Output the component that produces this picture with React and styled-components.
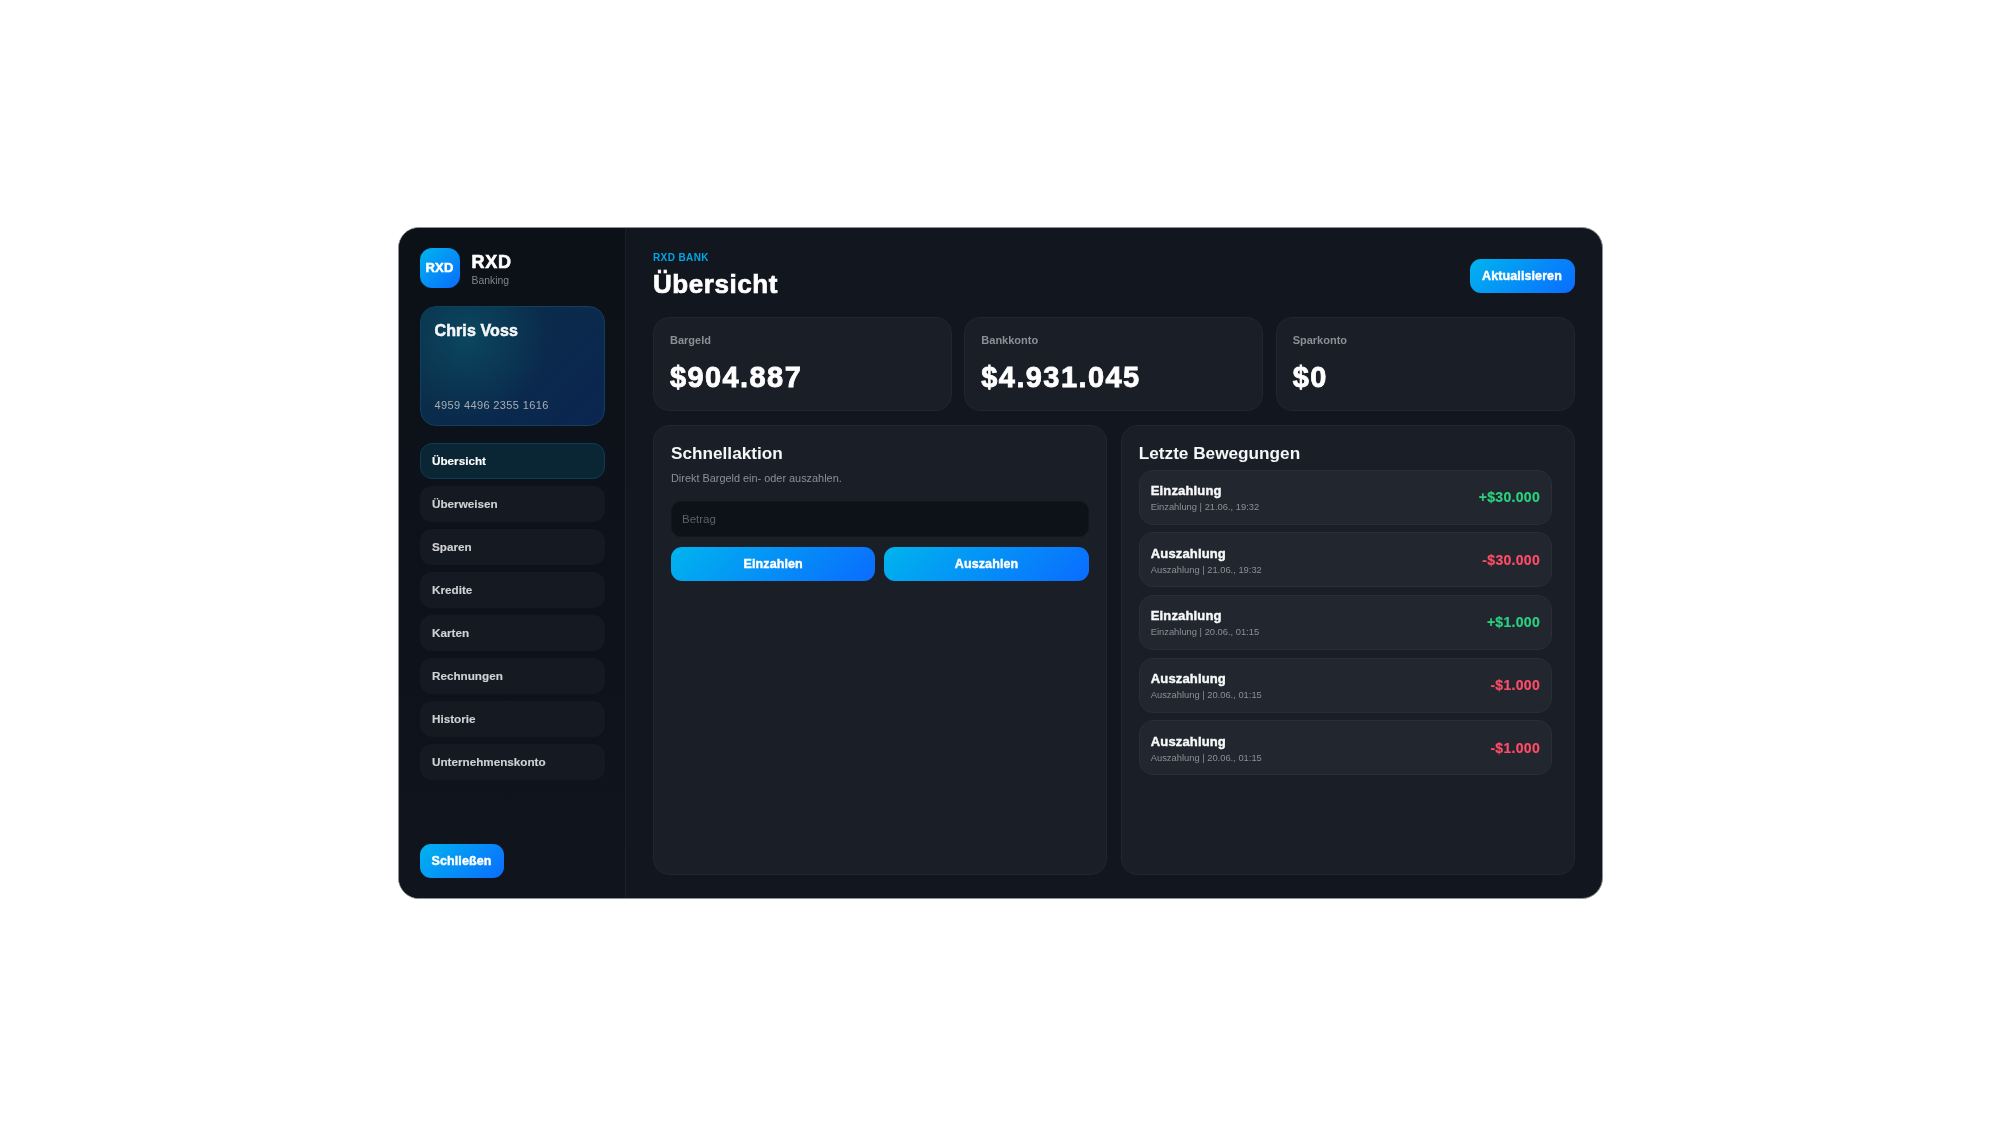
import React from "react";
import styled, { createGlobalStyle } from "styled-components";

const Global = createGlobalStyle`
  html, body { margin: 0; padding: 0; background: #fff; }
  body { font-family: "Liberation Sans", Arial, sans-serif; }
  * { box-sizing: border-box; }
`;

const gradient = "linear-gradient(135deg, #00b4ee, #0a6cff)";

const Page = styled.div`
  width: 2000px;
  height: 1125px;
  display: flex;
  align-items: center;
  justify-content: center;
`;
const Frame = styled.div`
  width: 1205px;
  height: 672px;
  display: flex;
  border: 1.5px solid #8d9297;
  border-radius: 21px;
  overflow: hidden;
  background: #12161e;
  filter: blur(0.4px);
`;
const Sidebar = styled.aside`
  width: 227px;
  flex: none;
  display: flex;
  flex-direction: column;
  padding: 20px 20px 20px 21px;
  background: linear-gradient(180deg, #0c1017, #0f141d);
  border-right: 1px solid #1a1f28;
`;
const Brand = styled.div`
  height: 40px;
  display: flex;
  align-items: center;
  gap: 12px;
`;
const Logo = styled.div`
  width: 40px;
  height: 40px;
  border-radius: 12px;
  background: ${gradient};
  color: #fff;
  font-size: 13px;
  font-weight: 900;
  letter-spacing: 0.2px;
  display: flex;
  align-items: center;
  justify-content: center;
  -webkit-text-stroke: 0.5px #fff;
`;
const BrandText = styled.div`
  display: flex;
  flex-direction: column;
  padding-top: 5px;
`;
const BrandName = styled.div`
  font-size: 18px;
  line-height: 21px;
  font-weight: 900;
  letter-spacing: 0.8px;
  color: #fff;
  -webkit-text-stroke: 0.6px #fff;
`;
const BrandSub = styled.div`
  font-size: 10.4px;
  line-height: 16px;
  color: #80848c;
`;
const Card = styled.div`
  margin-top: 18px;
  height: 120px;
  border-radius: 16px;
  border: 1px solid #10405f;
  padding: 15px 14px 14px;
  display: flex;
  flex-direction: column;
  justify-content: space-between;
  background: radial-gradient(circle at 25% 25%, #0b465f 0%, rgba(11, 70, 95, 0) 50%), linear-gradient(135deg, #0a2f47, #0b2550);
`;
const Holder = styled.div`
  font-size: 16px;
  font-weight: 900;
  letter-spacing: 0.1px;
  color: #f2f4f6;
  -webkit-text-stroke: 0.5px #fff;
`;
const CardNumber = styled.div`
  font-size: 11px;
  letter-spacing: 0.38px;
  color: #a7adb5;
`;
const Nav = styled.nav`
  margin-top: 17px;
  display: flex;
  flex-direction: column;
  gap: 7px;
`;
const NavItem = styled.div`
  height: 36px;
  display: flex;
  align-items: center;
  padding: 0 11.5px;
  border-radius: 12px;
  font-size: 11.7px;
  font-weight: 700;
  -webkit-text-stroke: 0.15px currentColor;
  color: ${(p) => (p.$active ? "#fff" : "#cfd1d4")};
  background: ${(p) => (p.$active ? "#0a2635" : "#151922")};
  border: 1px solid ${(p) => (p.$active ? "#0c3d55" : "transparent")};
`;
const Close = styled.button`
  margin-top: auto;
  align-self: flex-start;
  height: 34px;
  width: 84px;
  border: 0;
  border-radius: 11px;
  background: ${gradient};
  color: #fff;
  font: 900 12.5px "Liberation Sans", sans-serif;
  letter-spacing: 0.1px;
  -webkit-text-stroke: 0.4px #fff;
`;
const Main = styled.main`
  flex: 1;
  min-width: 0;
  display: flex;
  flex-direction: column;
  padding: 24px 27px 23px 27.5px;
`;
const Header = styled.header`
  display: flex;
  justify-content: space-between;
  align-items: flex-end;
`;
const Eyebrow = styled.div`
  font-size: 10px;
  line-height: 12px;
  font-weight: 700;
  letter-spacing: 0.4px;
  color: #00a5e6;
`;
const Title = styled.h1`
  margin: 4px 0 0;
  font-size: 26px;
  line-height: 33px;
  font-weight: 900;
  letter-spacing: 0.55px;
  color: #fff;
  -webkit-text-stroke: 0.7px #fff;
`;
const Refresh = styled(Close)`
  margin: 0 0 7.5px;
  width: 105px;
  align-self: flex-end;
`;
const Stats = styled.section`
  margin-top: 16px;
  display: grid;
  grid-template-columns: repeat(3, 1fr);
  gap: 12.5px;
`;
const Stat = styled.div`
  height: 94px;
  border-radius: 16px;
  background: #1a1e27;
  border: 1px solid #22262f;
  padding: 15px 16px;
`;
const StatLabel = styled.div`
  font-size: 11px;
  line-height: 14px;
  font-weight: 700;
  color: #8c8f95;
`;
const StatValue = styled.div`
  margin-top: 13px;
  font-size: 29px;
  line-height: 34px;
  font-weight: 900;
  letter-spacing: 1.4px;
  color: #fff;
  -webkit-text-stroke: 0.8px #fff;
`;
const Panels = styled.section`
  margin-top: 14px;
  flex: 1;
  min-height: 0;
  display: grid;
  grid-template-columns: 1fr 1fr;
  gap: 14px;
`;
const Panel = styled.div`
  border-radius: 16px;
  background: #1a1e27;
  border: 1px solid #22262f;
  padding: 17px 17px;
  display: flex;
  flex-direction: column;
`;
const PanelTitle = styled.h2`
  margin: 0;
  font-size: 17.2px;
  line-height: 21px;
  font-weight: 700;
  color: #f5f6f7;
`;
const PanelText = styled.p`
  margin: 7px 0 0;
  font-size: 10.9px;
  line-height: 14px;
  color: #8c8f95;
`;
const Amount = styled.div`
  margin-top: 16px;
  height: 36px;
  border-radius: 10px;
  background: #0d1118;
  border: 1px solid #12161d;
  padding: 0 10px;
  display: flex;
  align-items: center;
  font-size: 11.5px;
  color: #5c6068;
`;
const Actions = styled.div`
  margin-top: 10px;
  display: grid;
  grid-template-columns: 1fr 1fr;
  gap: 9px;
`;
const Action = styled(Close)`
  margin: 0;
  width: auto;
  height: 34px;
`;
const List = styled.div`
  margin-top: 6px;
  margin-right: 5px;
  display: flex;
  flex-direction: column;
  gap: 7.7px;
`;
const Row = styled.div`
  height: 55px;
  border-radius: 14px;
  background: #22262e;
  border: 1px solid #2a2e37;
  padding: 0 10.5px 0 11px;
  display: flex;
  align-items: center;
  justify-content: space-between;
`;
const RowText = styled.div`
  padding-top: 3px;
`;
const RowTitle = styled.div`
  font-size: 13px;
  line-height: 16px;
  font-weight: 900;
  letter-spacing: 0.15px;
  color: #f5f6f7;
  -webkit-text-stroke: 0.4px #fff;
`;
const RowMeta = styled.div`
  margin-top: 2px;
  font-size: 9.35px;
  line-height: 13px;
  color: #8c8f95;
`;
const RowAmount = styled.div`
  font-size: 14px;
  font-weight: 700;
  letter-spacing: 0.3px;
  color: ${(p) => (p.$in ? "#2bd17e" : "#ff4d67")};
  -webkit-text-stroke: 0.2px currentColor;
`;

const nav = ["Übersicht", "Überweisen", "Sparen", "Kredite", "Karten", "Rechnungen", "Historie", "Unternehmenskonto"];
const stats = [["Bargeld", "$904.887"], ["Bankkonto", "$4.931.045"], ["Sparkonto", "$0"]];
const rows = [
  ["Einzahlung", "21.06., 19:32", "+$30.000", true],
  ["Auszahlung", "21.06., 19:32", "-$30.000", false],
  ["Einzahlung", "20.06., 01:15", "+$1.000", true],
  ["Auszahlung", "20.06., 01:15", "-$1.000", false],
  ["Auszahlung", "20.06., 01:15", "-$1.000", false],
];

export default function App() {
  return (
    <Page>
      <Global />
      <Frame>
        <Sidebar>
          <Brand>
            <Logo>RXD</Logo>
            <BrandText>
              <BrandName>RXD</BrandName>
              <BrandSub>Banking</BrandSub>
            </BrandText>
          </Brand>
          <Card>
            <Holder>Chris Voss</Holder>
            <CardNumber>4959 4496 2355 1616</CardNumber>
          </Card>
          <Nav>
            {nav.map((n, i) => (
              <NavItem key={n} $active={i === 0}>{n}</NavItem>
            ))}
          </Nav>
          <Close>Schließen</Close>
        </Sidebar>
        <Main>
          <Header>
            <div>
              <Eyebrow>RXD BANK</Eyebrow>
              <Title>Übersicht</Title>
            </div>
            <Refresh>Aktualisieren</Refresh>
          </Header>
          <Stats>
            {stats.map(([l, v]) => (
              <Stat key={l}>
                <StatLabel>{l}</StatLabel>
                <StatValue>{v}</StatValue>
              </Stat>
            ))}
          </Stats>
          <Panels>
            <Panel>
              <PanelTitle>Schnellaktion</PanelTitle>
              <PanelText>Direkt Bargeld ein- oder auszahlen.</PanelText>
              <Amount>Betrag</Amount>
              <Actions>
                <Action>Einzahlen</Action>
                <Action>Auszahlen</Action>
              </Actions>
            </Panel>
            <Panel>
              <PanelTitle>Letzte Bewegungen</PanelTitle>
              <List>
                {rows.map(([t, d, a, inn], i) => (
                  <Row key={i}>
                    <RowText>
                      <RowTitle>{t}</RowTitle>
                      <RowMeta>{t} | {d}</RowMeta>
                    </RowText>
                    <RowAmount $in={inn}>{a}</RowAmount>
                  </Row>
                ))}
              </List>
            </Panel>
          </Panels>
        </Main>
      </Frame>
    </Page>
  );
}
